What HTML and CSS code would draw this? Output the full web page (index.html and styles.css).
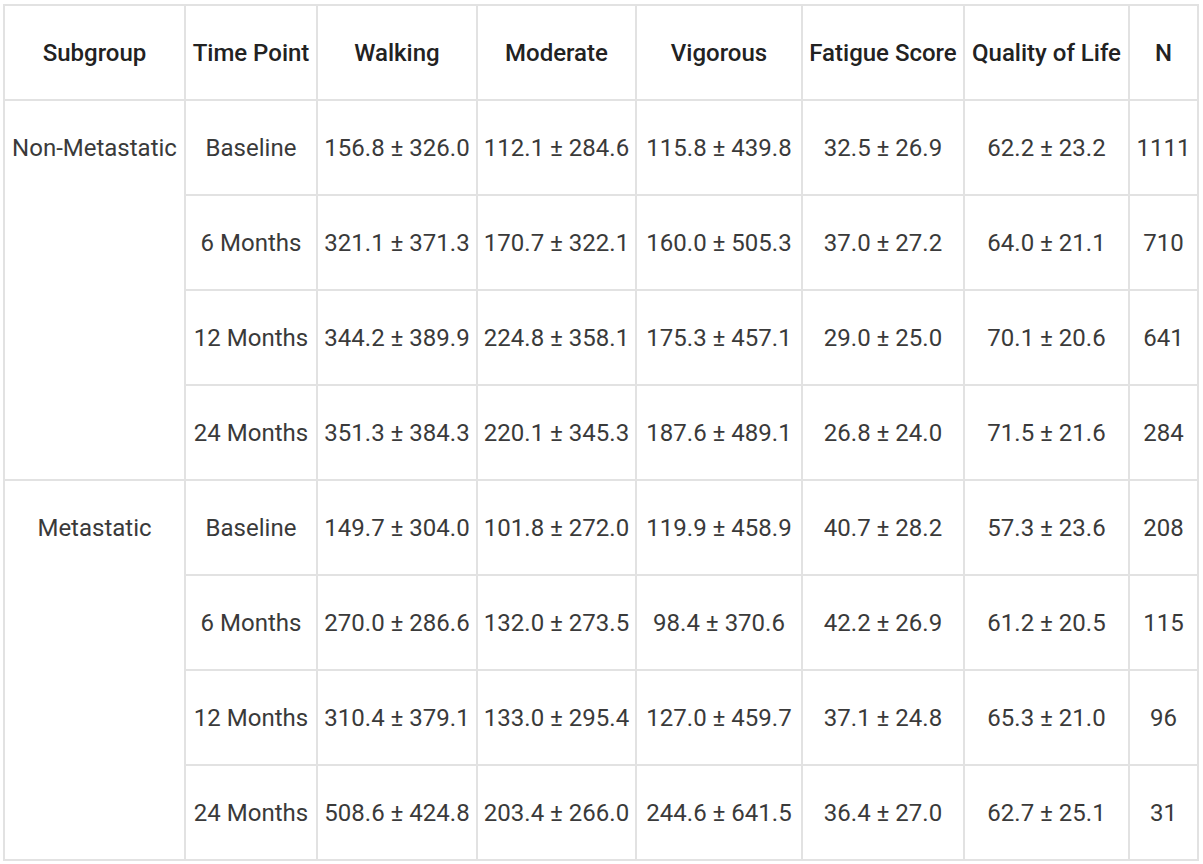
FILE: index.html
```html
<!DOCTYPE html>
<html>
<head>
<meta charset="utf-8">
<link rel="stylesheet" href="styles.css">
</head>
<body>
<table class="data">
  <colgroup>
    <col class="c-sub"><col class="c-time"><col class="c-walk"><col class="c-mod"><col class="c-vig"><col class="c-fat"><col class="c-qol"><col class="c-n">
  </colgroup>
  <thead>
    <tr><th>Subgroup</th><th>Time Point</th><th>Walking</th><th>Moderate</th><th>Vigorous</th><th>Fatigue Score</th><th>Quality of Life</th><th>N</th></tr>
  </thead>
  <tbody>
    <tr><td rowspan="4">Non-Metastatic</td><td>Baseline</td><td>156.8 ± 326.0</td><td>112.1 ± 284.6</td><td>115.8 ± 439.8</td><td>32.5 ± 26.9</td><td>62.2 ± 23.2</td><td>1111</td></tr>
    <tr><td>6 Months</td><td>321.1 ± 371.3</td><td>170.7 ± 322.1</td><td>160.0 ± 505.3</td><td>37.0 ± 27.2</td><td>64.0 ± 21.1</td><td>710</td></tr>
    <tr><td>12 Months</td><td>344.2 ± 389.9</td><td>224.8 ± 358.1</td><td>175.3 ± 457.1</td><td>29.0 ± 25.0</td><td>70.1 ± 20.6</td><td>641</td></tr>
    <tr><td>24 Months</td><td>351.3 ± 384.3</td><td>220.1 ± 345.3</td><td>187.6 ± 489.1</td><td>26.8 ± 24.0</td><td>71.5 ± 21.6</td><td>284</td></tr>
    <tr><td rowspan="4">Metastatic</td><td>Baseline</td><td>149.7 ± 304.0</td><td>101.8 ± 272.0</td><td>119.9 ± 458.9</td><td>40.7 ± 28.2</td><td>57.3 ± 23.6</td><td>208</td></tr>
    <tr><td>6 Months</td><td>270.0 ± 286.6</td><td>132.0 ± 273.5</td><td>98.4 ± 370.6</td><td>42.2 ± 26.9</td><td>61.2 ± 20.5</td><td>115</td></tr>
    <tr><td>12 Months</td><td>310.4 ± 379.1</td><td>133.0 ± 295.4</td><td>127.0 ± 459.7</td><td>37.1 ± 24.8</td><td>65.3 ± 21.0</td><td>96</td></tr>
    <tr><td>24 Months</td><td>508.6 ± 424.8</td><td>203.4 ± 266.0</td><td>244.6 ± 641.5</td><td>36.4 ± 27.0</td><td>62.7 ± 25.1</td><td>31</td></tr>
  </tbody>
</table>
</body>
</html>
```

FILE: styles.css
```css
html, body {
  margin: 0;
  padding: 0;
  background: #ffffff;
}
body {
  padding: 4px 0 0 3px;
  font-family: Roboto, "Liberation Sans", sans-serif;
}
.data {
  border-collapse: collapse;
  table-layout: fixed;
  width: 1196px;
  border: 2px solid #dcdcdc;
}
.c-sub { width: 181px; }
.c-time { width: 132px; }
.c-walk { width: 160px; }
.c-mod { width: 159px; }
.c-vig { width: 166px; }
.c-fat { width: 162px; }
.c-qol { width: 165px; }
.c-n { width: 69px; }
.data th, .data td {
  border: 2px solid #e2e2e2;
  text-align: center;
  vertical-align: top;
  font-size: 24px;
  line-height: 28px;
  height: 28px;
  padding: 33px 0 32px;
  white-space: nowrap;
  overflow: hidden;
}
.data th {
  font-weight: 500;
  color: #222222;
}
.data td {
  font-weight: 400;
  color: #3a3a3a;
}
```
